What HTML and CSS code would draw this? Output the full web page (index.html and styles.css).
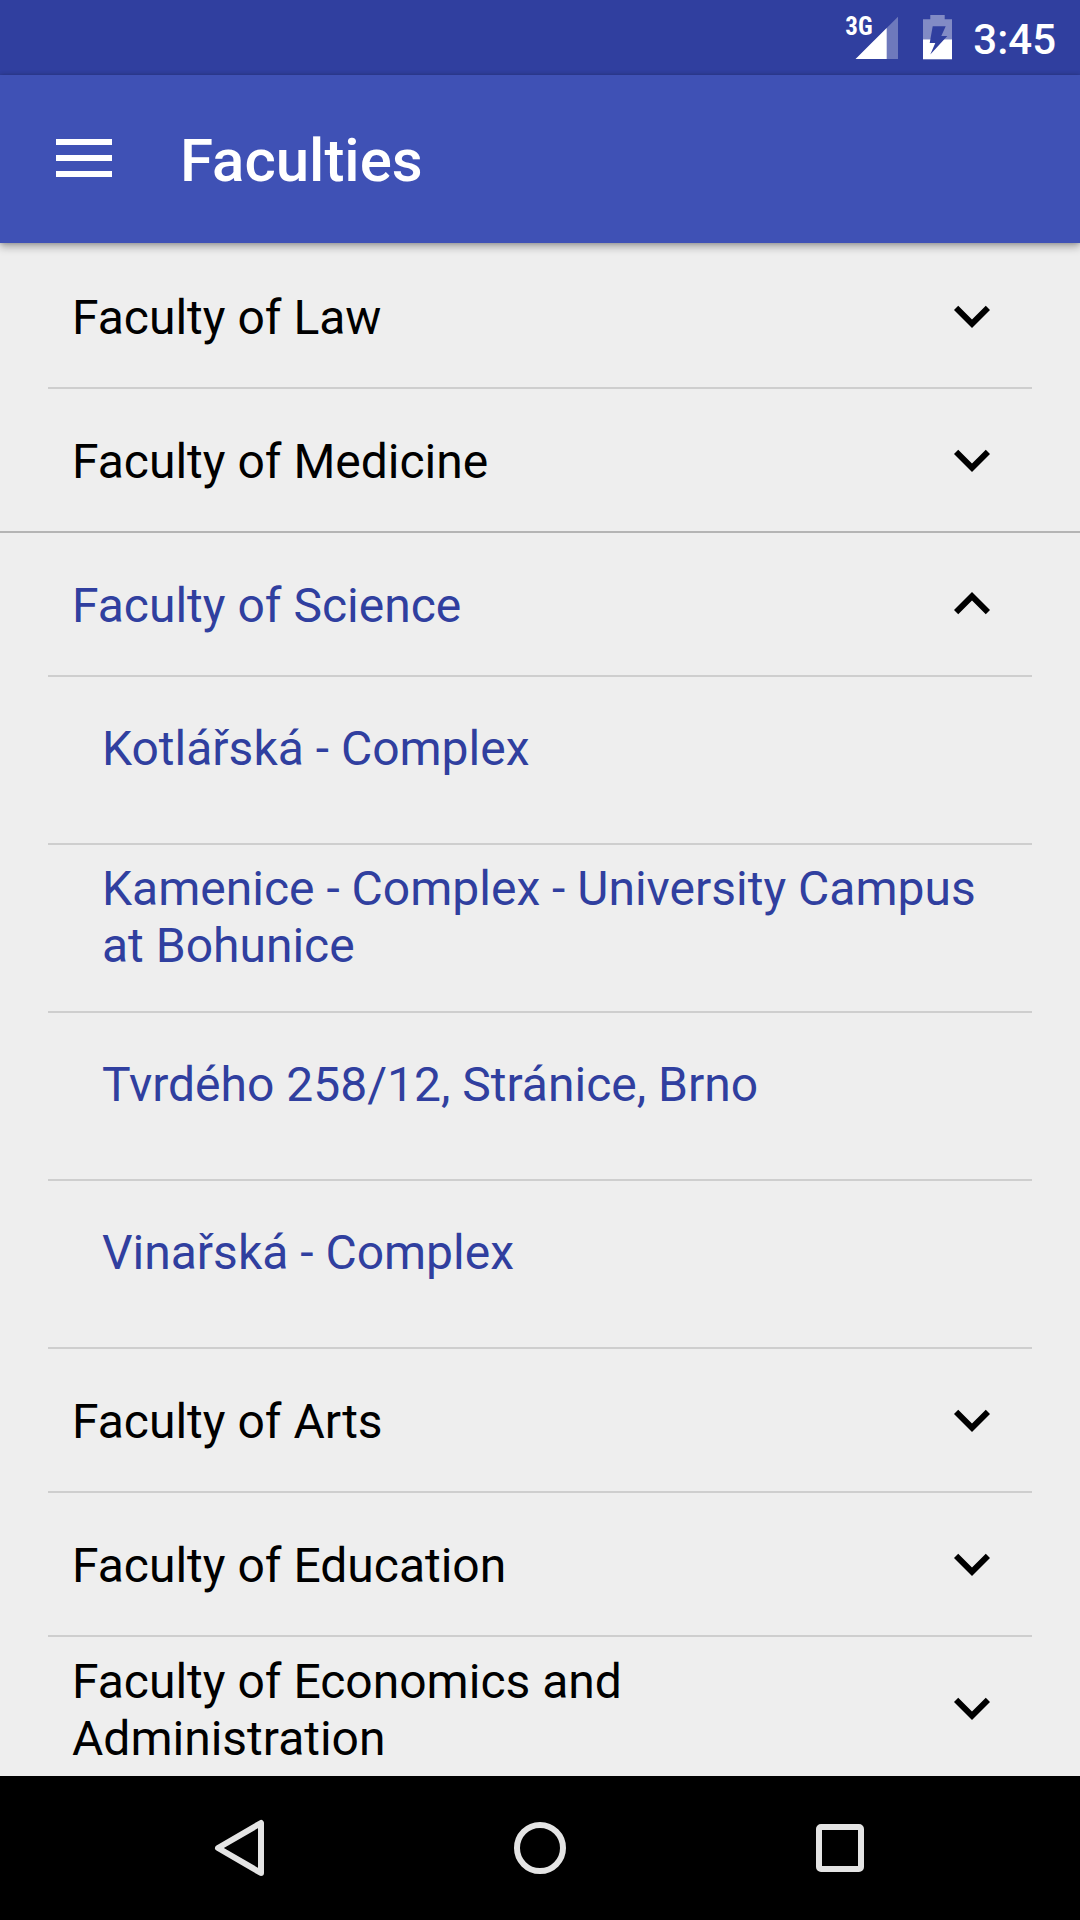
FILE: index.html
```html
<!DOCTYPE html>
<html lang="en">
<head>
<meta charset="utf-8">
<meta name="viewport" content="width=device-width, initial-scale=1">
<title>Faculties</title>
<link rel="stylesheet" href="styles.css">
</head>
<body>
<svg class="defs" aria-hidden="true">
  <symbol id="expand-more" viewBox="0 0 24 24"><path d="M16.59 8.59L12 13.17 7.41 8.59 6 10l6 6 6-6z"/></symbol>
  <symbol id="expand-less" viewBox="0 0 24 24"><path d="M12 8l-6 6 1.41 1.41L12 10.83l4.59 4.58L18 14z"/></symbol>
</svg>

<div class="status-bar">
  <div class="signal">
    <span class="network">3G</span>
    <svg class="signal-icon" viewBox="0 0 44 44" aria-hidden="true">
      <path d="M0.6 43L43 0.7V43z" fill="#fff" fill-opacity=".3"/>
      <path d="M0.6 43L31.7 12V43z" fill="#fff"/>
    </svg>
  </div>
  <svg class="battery-icon" viewBox="0 0 30 45" aria-hidden="true">
    <path d="M7.3 0h14.4V4.3H29v20H0V4.3h7.3z" fill="#fff" fill-opacity=".4"/>
    <path d="M0 24.3h29v20H0z" fill="#fff"/>
    <path d="M9.7 11.2h13L18.3 21h6L7.3 39.5 12.3 28H6.7z" fill="#303f9f"/>
  </svg>
  <span class="clock">3:45</span>
</div>

<header class="toolbar">
  <button class="menu-button" type="button" aria-label="Menu">
    <svg viewBox="0 0 56 40" aria-hidden="true"><path d="M0 0h56v6H0zM0 16h56v6H0zM0 32h56v6H0z" fill="#fff"/></svg>
  </button>
  <h1 class="title">Faculties</h1>
</header>

<main class="content">
  <ul class="faculties">
    <li><button class="faculty" type="button" aria-expanded="false"><span class="label">Faculty of Law</span><svg class="chevron" aria-hidden="true"><use href="#expand-more"/></svg></button></li>
    <li><button class="faculty" type="button" aria-expanded="false"><span class="label">Faculty of Medicine</span><svg class="chevron" aria-hidden="true"><use href="#expand-more"/></svg></button></li>
    <li class="open">
      <button class="faculty" type="button" aria-expanded="true"><span class="label">Faculty of Science</span><svg class="chevron" aria-hidden="true"><use href="#expand-less"/></svg></button>
      <ul class="buildings">
        <li><a class="building" href="#kotlarska">Kotlářská - Complex</a></li>
        <li><a class="building" href="#kamenice">Kamenice - Complex - University Campus at Bohunice</a></li>
        <li><a class="building" href="#tvrdeho">Tvrdého 258/12, Stránice, Brno</a></li>
        <li><a class="building" href="#vinarska">Vinařská - Complex</a></li>
      </ul>
    </li>
    <li><button class="faculty" type="button" aria-expanded="false"><span class="label">Faculty of Arts</span><svg class="chevron" aria-hidden="true"><use href="#expand-more"/></svg></button></li>
    <li><button class="faculty" type="button" aria-expanded="false"><span class="label">Faculty of Education</span><svg class="chevron" aria-hidden="true"><use href="#expand-more"/></svg></button></li>
    <li><button class="faculty" type="button" aria-expanded="false"><span class="label">Faculty of Economics and Administration</span><svg class="chevron" aria-hidden="true"><use href="#expand-more"/></svg></button></li>
  </ul>
</main>

<nav class="nav-bar" aria-label="System">
  <button class="nav-button" type="button" aria-label="Back">
    <svg viewBox="0 0 72 72" aria-hidden="true"><path d="M57 11V61L14 36z"/></svg>
  </button>
  <button class="nav-button" type="button" aria-label="Home">
    <svg viewBox="0 0 72 72" aria-hidden="true"><circle cx="36" cy="36" r="23"/></svg>
  </button>
  <button class="nav-button" type="button" aria-label="Overview">
    <svg viewBox="0 0 72 72" aria-hidden="true"><rect x="15" y="15" width="42" height="42" rx="2"/></svg>
  </button>
</nav>
</body>
</html>
```
FILE: styles.css
```css
* {
  box-sizing: border-box;
}

body {
  display: flex;
  flex-direction: column;
  height: 100vh;
  margin: 0;
  background: #eee;
  color: #000;
  font-family: Roboto, "Noto Sans", sans-serif;
}

ul {
  margin: 0;
  padding: 0;
  list-style: none;
}

button {
  margin: 0;
  padding: 0;
  border: 0;
  background: none;
  color: inherit;
  font: inherit;
  text-align: left;
}

svg {
  display: block;
}

.defs {
  position: absolute;
  width: 0;
  height: 0;
}

/* Status bar */
.status-bar {
  display: flex;
  flex: none;
  align-items: center;
  justify-content: flex-end;
  height: 75px;
  padding-right: 24px;
  background: #303f9f;
  color: #fff;
}

.signal {
  position: relative;
  margin-right: 24px;
}

.signal-icon {
  width: 44px;
  height: 44px;
}

.network {
  position: absolute;
  top: -1px;
  left: -10px;
  font: 700 25px/24px "Roboto Condensed", Roboto, sans-serif;
}

.battery-icon {
  width: 30px;
  height: 45px;
  margin-right: 20px;
}

.clock {
  padding-top: 4px;
  font-size: 42px;
  font-weight: 500;
  line-height: 50px;
}

/* App bar */
.toolbar {
  position: relative;
  z-index: 1;
  display: flex;
  flex: none;
  align-items: center;
  gap: 68px;
  height: 168px;
  padding: 0 56px;
  background: #3f51b5;
  box-shadow: 0 4px 8px rgba(0, 0, 0, .3), 0 0 4px rgba(0, 0, 0, .2);
  color: #fff;
}

.menu-button svg {
  width: 56px;
  height: 40px;
}

.title {
  margin: 0;
  padding-top: 4px;
  font-size: 60px;
  font-weight: 500;
  line-height: 70px;
}

/* Faculty list */
.content {
  flex: 1;
  min-height: 0;
  overflow-y: auto;
  scrollbar-width: none;
}

.faculties > li {
  padding: 0 48px;
}

.faculties > .open {
  padding: 0;
  border-top: 2px solid #b4b4b4;
}

.faculty {
  display: flex;
  align-items: center;
  justify-content: space-between;
  width: 100%;
  min-height: 144px;
  padding: 0 24px;
  border-top: 2px solid #cecece;
  font-size: 48px;
  line-height: 57px;
}

.faculties > li:first-child .faculty {
  border-top-color: transparent;
}

.open > .faculty {
  width: calc(100% - 96px);
  min-height: 142px;
  margin: 0 48px;
  border-top: 0;
}

.label {
  padding-top: 3px;
}

.open .label,
.building {
  color: #303f9f;
}

.chevron {
  flex: none;
  width: 72px;
  height: 72px;
}

.buildings {
  padding: 0 48px;
}

.building {
  display: flex;
  align-items: center;
  min-height: 168px;
  padding: 0 54px 23px;
  border-top: 2px solid #cecece;
  font-size: 48px;
  line-height: 57px;
  text-decoration: none;
}

/* Navigation bar */
.nav-bar {
  display: flex;
  flex: none;
  justify-content: center;
  height: 144px;
  background: #000;
}

.nav-button {
  display: flex;
  flex: 0 1 300px;
  align-items: center;
  justify-content: center;
}

.nav-button svg {
  width: 72px;
  height: 72px;
  fill: none;
  stroke: #e4e4e4;
  stroke-linejoin: round;
  stroke-width: 6px;
}
```
